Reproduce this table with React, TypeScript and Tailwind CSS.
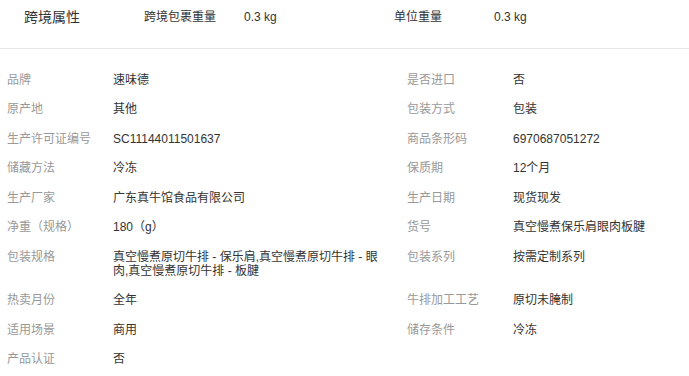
import React from 'react';

const rows: [string, string, string, string][] = [
  ['品牌', '速味德', '是否进口', '否'],
  ['原产地', '其他', '包装方式', '包装'],
  ['生产许可证编号', 'SC11144011501637', '商品条形码', '6970687051272'],
  ['储藏方法', '冷冻', '保质期', '12个月'],
  ['生产厂家', '广东真牛馆食品有限公司', '生产日期', '现货现发'],
  ['净重（规格）', '180（g）', '货号', '真空慢煮保乐肩眼肉板腱'],
  ['包装规格', '真空慢煮原切牛排 - 保乐肩,真空慢煮原切牛排 - 眼肉,真空慢煮原切牛排 - 板腱', '包装系列', '按需定制系列'],
  ['热卖月份', '全年', '牛排加工工艺', '原切未腌制'],
  ['适用场景', '商用', '储存条件', '冷冻'],
  ['产品认证', '否', '', ''],
];

const Cell: React.FC<{ label: string; value: string }> = ({ label, value }) => (
  <div className="flex w-[400px] shrink-0 py-[7.75px] leading-[14px] text-[12px]">
    <div className="w-[106px] shrink-0 text-[#999]">{label}</div>
    <div className="w-[270px] text-[#333]">{value}</div>
  </div>
);

export default function App() {
  return (
    <div
      className="w-[689px] h-[376px] bg-white overflow-hidden"
      style={{ fontFamily: '"Liberation Sans", Arial, "Noto Sans CJK SC", sans-serif' }}
    >
      <div className="flex items-center h-[49px] pb-[14px] border-b border-[#e8e8e8] text-[#333]">
        <div className="w-[144px] pl-[24px] text-[14px] leading-[20px]">跨境属性</div>
        <div className="flex w-[250px] text-[12px]">
          <span className="w-[100px]">跨境包裹重量</span>
          <span>0.3 kg</span>
        </div>
        <div className="flex text-[12px]">
          <span className="w-[100px]">单位重量</span>
          <span>0.3 kg</span>
        </div>
      </div>

      <div className="pt-[16px] pl-[7px]">
        {rows.map(([l1, v1, l2, v2]) => (
          <div key={l1} className="flex">
            <Cell label={l1} value={v1} />
            {l2 && <Cell label={l2} value={v2} />}
          </div>
        ))}
      </div>
    </div>
  );
}
